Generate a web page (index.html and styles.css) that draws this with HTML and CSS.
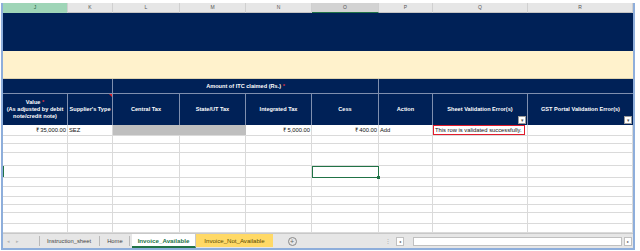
FILE: index.html
```html
<!DOCTYPE html>
<html lang="en">
<head>
    <meta charset="UTF-8">
    <title>Invoice_Available</title>
    <link rel="stylesheet" href="styles.css">
</head>
<body>

    <div class="window">
        <div class="cols colheads">
            <div class="ch sel">J</div>
            <div class="ch">K</div>
            <div class="ch">L</div>
            <div class="ch">M</div>
            <div class="ch">N</div>
            <div class="ch active">O</div>
            <div class="ch">P</div>
            <div class="ch">Q</div>
            <div class="ch">R</div>
        </div>

        <div class="banner"></div>
        <div class="note"></div>

        <div class="cols group">
            <div class="g span2"></div>
            <div class="g span4">Amount of ITC claimed (Rs.) <span class="req">*</span></div>
            <div class="g span3"></div>
        </div>

        <div class="cols head">
            <div class="h"><span>Value <span class="req">*</span><br>(As adjusted by debit<br>note/credit note)</span></div>
            <div class="h comment"><span>Supplier's Type</span></div>
            <div class="h"><span>Central Tax</span></div>
            <div class="h"><span>State/UT Tax</span></div>
            <div class="h"><span>Integrated Tax</span></div>
            <div class="h"><span>Cess</span></div>
            <div class="h"><span>Action</span></div>
            <div class="h"><span>Sheet Validation Error(s)</span><i class="filter">&#9662;</i></div>
            <div class="h"><span>GST Portal Validation Error(s)</span><i class="filter">&#9662;</i></div>
        </div>

        <div class="cols row r10">
            <div class="c num">₹ 35,000.00</div>
            <div class="c">SEZ</div>
            <div class="c grey"></div>
            <div class="c grey"></div>
            <div class="c num">₹ 5,000.00</div>
            <div class="c num">₹ 400.00</div>
            <div class="c">Add</div>
            <div class="c"><span class="ok">This row is validated successfully.</span></div>
            <div class="c"></div>
        </div>

        <div class="cols row r9"><div class="c"></div><div class="c"></div><div class="c"></div><div class="c"></div><div class="c"></div><div class="c"></div><div class="c"></div><div class="c"></div><div class="c"></div></div>
        <div class="cols row r9"><div class="c"></div><div class="c"></div><div class="c"></div><div class="c"></div><div class="c"></div><div class="c"></div><div class="c"></div><div class="c"></div><div class="c"></div></div>
        <div class="cols row r13"><div class="c"></div><div class="c"></div><div class="c"></div><div class="c"></div><div class="c"></div><div class="c"></div><div class="c"></div><div class="c"></div><div class="c"></div></div>
        <div class="cols row r12 current"><div class="c"></div><div class="c"></div><div class="c"></div><div class="c"></div><div class="c"></div><div class="c picked"></div><div class="c"></div><div class="c"></div><div class="c"></div></div>
        <div class="cols row r9"><div class="c"></div><div class="c"></div><div class="c"></div><div class="c"></div><div class="c"></div><div class="c"></div><div class="c"></div><div class="c"></div><div class="c"></div></div>
        <div class="cols row r10"><div class="c"></div><div class="c"></div><div class="c"></div><div class="c"></div><div class="c"></div><div class="c"></div><div class="c"></div><div class="c"></div><div class="c"></div></div>
        <div class="cols row r8"><div class="c"></div><div class="c"></div><div class="c"></div><div class="c"></div><div class="c"></div><div class="c"></div><div class="c"></div><div class="c"></div><div class="c"></div></div>
        <div class="cols row r8"><div class="c"></div><div class="c"></div><div class="c"></div><div class="c"></div><div class="c"></div><div class="c"></div><div class="c"></div><div class="c"></div><div class="c"></div></div>
        <div class="cols row r11"><div class="c"></div><div class="c"></div><div class="c"></div><div class="c"></div><div class="c"></div><div class="c"></div><div class="c"></div><div class="c"></div><div class="c"></div></div>
        <div class="cols row r9"><div class="c"></div><div class="c"></div><div class="c"></div><div class="c"></div><div class="c"></div><div class="c"></div><div class="c"></div><div class="c"></div><div class="c"></div></div>

        <div class="tabs">
            <div class="nav">
                <span>&#9666;</span>
                <span>&#9656;</span>
            </div>
            <div class="tab">Instruction_sheet</div>
            <div class="tab">Home</div>
            <div class="tab current-tab">Invoice_Available</div>
            <div class="tab yellow">Invoice_Not_Available</div>
            <div class="add">+</div>
            <div class="grip">&#8942;</div>
            <div class="scroll">
                <span class="btn">&#9666;</span>
                <span class="track"></span>
                <span class="btn">&#9656;</span>
            </div>
        </div>
    </div>

</body>
</html>
```

FILE: styles.css
```css
body {
    margin: 0;
    padding-top: 3px;
    background-color: #fff;
    font-family: 'Liberation Sans', Arial, sans-serif;
}

.window {
    width: 630px;
    margin-left: 1px;
    border-left: 2px solid #8eaedb;
    border-right: 2px solid #8eaedb;
    border-bottom: 2px solid #8eaedb;
    background-color: #fff;
}

.cols {
    display: grid;
    grid-template-columns: 65px 45px 67px 66px 66px 67px 54px 95px 105px;
}

/* column letters */
.colheads {
    height: 10px;
    background-color: #e6e6e6;
    border-bottom: 1px solid #c4c4c4;
    box-sizing: border-box;
}

.ch {
    font-size: 5px;
    color: #555;
    text-align: center;
    line-height: 9px;
    border-right: 1px solid #d0d0d0;
}

.ch.sel {
    background-color: #9fd5b7;
    color: #21603c;
}

.ch.active {
    background-color: #d3d3d3;
    border-bottom: 1px solid #217346;
}

.banner {
    height: 38px;
    background-color: #002157;
}

.note {
    height: 28px;
    background-color: #fff2cc;
    border-bottom: 1px solid #e0d4b0;
    box-sizing: border-box;
}

/* header block */
.group {
    height: 14px;
    background-color: #002157;
}

.g {
    color: #fff;
    font-size: 5.6px;
    font-weight: bold;
    text-align: center;
    line-height: 14px;
    border-right: 1px solid #7f8fae;
    box-sizing: border-box;
}

.span2 { grid-column: span 2; }
.span4 { grid-column: span 4; }
.span3 { grid-column: span 3; border-right: none; }

.req {
    color: #e0323c;
}

.head {
    height: 32px;
    background-color: #002157;
    border-top: 1px solid #7f8fae;
    box-sizing: border-box;
}

.h {
    position: relative;
    display: flex;
    align-items: center;
    justify-content: center;
    text-align: center;
    color: #fff;
    font-size: 5.6px;
    font-weight: bold;
    line-height: 7px;
    white-space: nowrap;
    border-right: 1px solid #7f8fae;
}

.h:last-child {
    border-right: none;
}

.comment::after {
    content: "";
    position: absolute;
    top: 0;
    right: 0;
    border-top: 3px solid #e0202a;
    border-left: 3px solid transparent;
}

.filter {
    position: absolute;
    right: 1px;
    bottom: 1px;
    width: 6px;
    height: 6px;
    background-color: #fff;
    border: 1px solid #9a9a9a;
    color: #555;
    font-size: 5px;
    line-height: 6px;
    font-style: normal;
    font-weight: normal;
}

/* grid body */
.row .c {
    border-right: 1px solid #dadada;
    border-bottom: 1px solid #dadada;
    box-sizing: border-box;
    font-size: 5.8px;
    color: #111;
    padding: 0 1px;
    display: flex;
    align-items: center;
    white-space: nowrap;
}

.r8 { height: 8px; }
.r9 { height: 9px; }
.r10 { height: 10px; }
.r11 { height: 11px; }
.r12 { height: 12px; }
.r13 { height: 13px; }

.row .num {
    justify-content: flex-end;
}

.row .grey {
    background-color: #bfbfbf;
    border-right-color: #bfbfbf;
}

.ok {
    border: 1px solid #e21b2b;
    margin-left: -1px;
    padding: 1px 2px 1px 1px;
    line-height: 6px;
}

.current .c:first-child {
    box-shadow: inset 1px 0 0 #217346;
}

.row .picked {
    border: 1px solid #217346;
    position: relative;
}

.picked::after {
    content: "";
    position: absolute;
    right: -2px;
    bottom: -2px;
    width: 3px;
    height: 3px;
    background-color: #217346;
}

/* sheet tabs */
.tabs {
    display: flex;
    align-items: stretch;
    height: 15px;
    background-color: #e6e6e6;
    border-top: 1px solid #c8c8c8;
    box-sizing: border-box;
    font-size: 5.8px;
    color: #444;
}

.nav {
    width: 32px;
    display: flex;
    gap: 6px;
    padding-left: 4px;
    align-items: center;
    color: #b5b5b5;
    font-size: 5px;
    border-right: 1px solid #b9b9b9;
    margin: 2px 0;
}

.tab {
    display: flex;
    align-items: center;
    padding: 0 5px;
    margin: 2px 0;
    border-right: 1px solid #b9b9b9;
}

.tab:nth-child(2) {
    padding-left: 7px;
    padding-right: 8px;
}

.tab:nth-child(3) {
    padding: 0 6px 0 7px;
}

.tab.current-tab {
    margin: 0 0 0 2px;
    background-color: #fff;
    color: #217346;
    font-weight: bold;
    font-size: 6.2px;
    border-bottom: 2px solid #217346;
    border-right: 1px solid #c8c8c8;
    padding: 0 6px;
}

.tab.yellow {
    margin: 0 0 1px;
    background-color: #ffd966;
    color: #5a4a00;
    font-size: 6.1px;
    padding: 0 8px;
    border-right: none;
}

.add {
    margin-left: 15px;
    margin-top: 3px;
    width: 7px;
    height: 7px;
    border: 1px solid #888;
    border-radius: 50%;
    color: #666;
    font-size: 7px;
    line-height: 7px;
    text-align: center;
}

.grip {
    margin-left: 88px;
    color: #aaa;
    display: flex;
    align-items: center;
}

.scroll {
    display: flex;
    align-items: center;
    gap: 1px;
    margin-left: 5px;
    flex: 1;
    padding-right: 1px;
}

.scroll .btn {
    width: 6px;
    height: 7px;
    background-color: #fff;
    border: 1px solid #c0c0c0;
    font-size: 4px;
    line-height: 7px;
    text-align: center;
    color: #555;
}

.scroll .track {
    flex: 1;
    height: 7px;
    margin: 0 1px 0 8px;
    background-color: #fff;
    border: 1px solid #c0c0c0;
}
```
